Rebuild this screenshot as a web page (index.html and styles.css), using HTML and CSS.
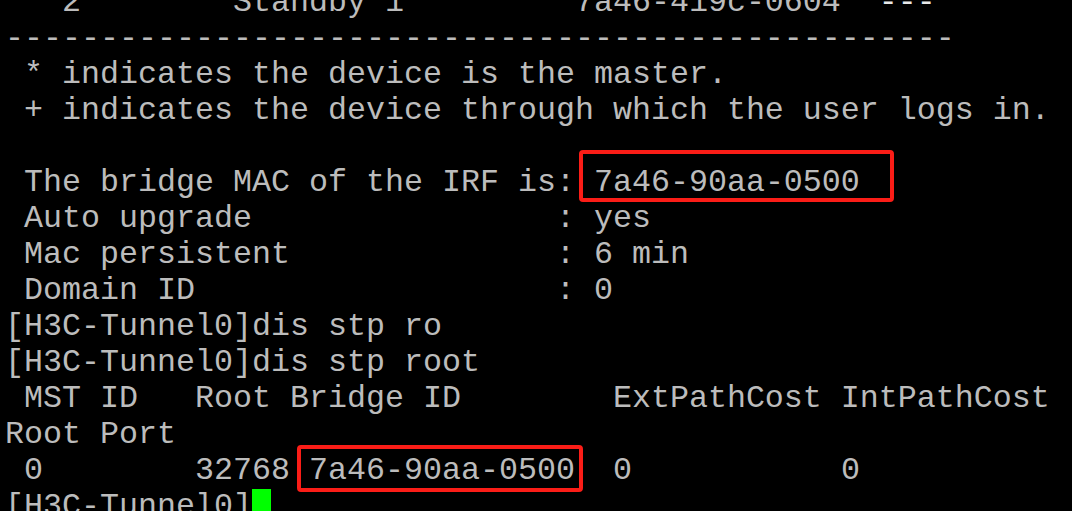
FILE: index.html
```html
<!DOCTYPE html>
<html>
<head>
<meta charset="utf-8">
<link rel="stylesheet" href="styles.css">
</head>
<body>
<div class="term">
<div class="line">   2        Standby 1         7a46-419c-0604  <span class="bright">---</span></div>
<div class="line">--------------------------------------------------</div>
<div class="line"> * indicates the device is the master.</div>
<div class="line"> + indicates the device through which the user logs in.</div>
<div class="line"> </div>
<div class="line"> The bridge MAC of the IRF is: <span class="mark mark-a">7a46-90aa-0500</span></div>
<div class="line"> Auto upgrade                : yes</div>
<div class="line"> Mac persistent              : 6 min</div>
<div class="line"> Domain ID                   : 0</div>
<div class="line">[H3C-Tunnel0]dis stp ro</div>
<div class="line">[H3C-Tunnel0]dis stp root</div>
<div class="line"> MST ID   Root Bridge ID        ExtPathCost IntPathCost</div>
<div class="line">Root Port</div>
<div class="line"> 0        32768 <span class="mark mark-b">7a46-90aa-0500</span>  0           0</div>
<div class="line">[H3C-Tunnel0]<span class="cursor"> </span></div>
</div>
</body>
</html>
```

FILE: styles.css
```css
html, body {
  margin: 0;
  padding: 0;
  background: #000;
  overflow: hidden;
}
.term {
  margin-top: -15px;
  padding-left: 5px;
  font-family: "Liberation Mono", "Courier New", monospace;
  font-size: 31.667px;
  line-height: 36px;
  color: #bcbcbc;
}
.line {
  white-space: pre;
  height: 36px;
}
.bright {
  color: #e8e8e8;
}
.mark {
  position: relative;
}
.mark::after {
  content: "";
  position: absolute;
  border: 4px solid #fb1d17;
  border-radius: 4px;
}
.mark-a::after {
  left: -15px;
  right: -34px;
  top: -15px;
  bottom: -1px;
}
.mark-b::after {
  left: -12px;
  right: -8px;
  top: -8px;
  bottom: -3px;
}
.cursor {
  background: #00ff00;
}
```
